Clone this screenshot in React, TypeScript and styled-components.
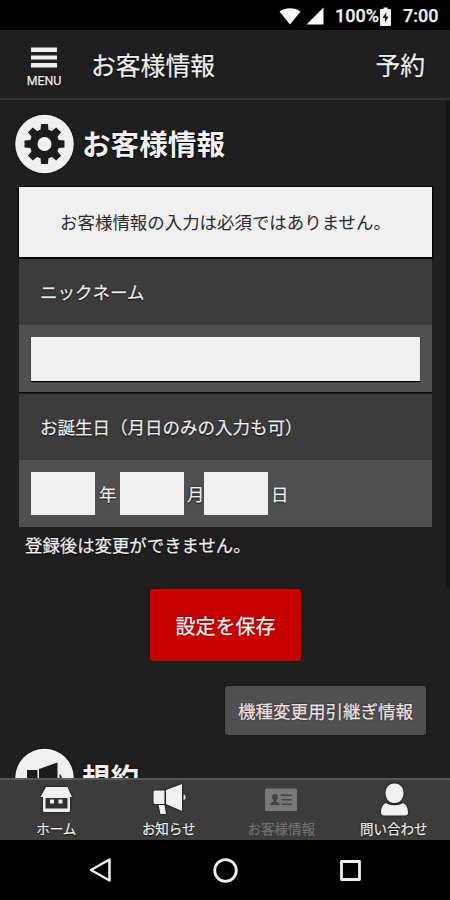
import React from "react";
import styled, { createGlobalStyle } from "styled-components";

const GlobalStyle = createGlobalStyle`
  * { box-sizing: border-box; }
  body { margin: 0; background: #000; }
  button, input { font: inherit; color: inherit; border: 0; padding: 0; margin: 0; border-radius: 0; background: none; }
`;

const Screen = styled.div`
  width: 450px;
  height: 900px;
  display: flex;
  flex-direction: column;
  overflow: hidden;
  background: #1f1f1f;
  color: #f0f0f0;
  font-family: Roboto, "Noto Sans CJK JP", sans-serif;
  text-shadow: 0 0 2px #000, 0 1px 1px #000;
  -webkit-text-stroke: 0.25px currentColor;
  white-space: nowrap;
`;

const StatusBar = styled.div`
  height: 30px;
  flex: none;
  display: flex;
  align-items: center;
  justify-content: flex-end;
  padding: 2px 12px 0 0;
  background: #000;
  font-size: 18px;
  font-weight: 500;
  line-height: 20px;
`;

const StatusIcon = styled.svg<{ $gap: number }>`
  display: block;
  flex: none;
  margin-right: ${(p) => p.$gap}px;
`;

const StatusText = styled.span<{ $width: number }>`
  width: ${(p) => p.$width}px;
`;

const Header = styled.header`
  height: 70px;
  flex: none;
  display: flex;
  align-items: center;
  padding: 0 25px 0 23px;
  border-bottom: 2px solid #353535;
  font-size: 24.8px;
  line-height: 36px;
`;

const MenuButton = styled.button`
  width: 42px;
  margin: 6px 26px 0 0;
  display: flex;
  flex-direction: column;
  align-items: center;
  gap: 5px;
  font-size: 12.4px;
  line-height: 14px;
  text-shadow: inherit;
`;

const HeaderTitle = styled.div`
  flex: 1;
  margin-top: 5px;
`;

const Reserve = styled.button`
  margin-top: 5px;
  text-shadow: inherit;
`;

const Content = styled.main`
  position: relative;
  flex: 1;
  min-height: 0;
  overflow: hidden;
  padding: 14px 18px 0 19px;
`;

const ScrollThumb = styled.div`
  position: absolute;
  top: 1px;
  right: 0;
  width: 4px;
  height: 486px;
  background: #151515;
`;

const SectionTitle = styled.h1`
  height: 60px;
  margin: 0 0 0 -4px;
  display: flex;
  align-items: center;
  gap: 8px;
  font-size: 28.6px;
  font-weight: 700;
  line-height: 42px;
  -webkit-text-stroke: 0;
  svg { display: block; flex: none; filter: drop-shadow(0 0 1px #000); }
`;

const TitleText = styled.span`
  padding-top: 2px;
`;

const Notice = styled.div`
  height: 70px;
  margin-top: 13px;
  padding-bottom: 2px;
  display: flex;
  align-items: center;
  justify-content: center;
  background: #f0f0f0;
  color: #2a2a2a;
  font-size: 17.45px;
  text-shadow: none;
  -webkit-text-stroke: 0;
  box-shadow: 0 0 0 1px #080808, 0 1px 1px 1px #000;
`;

const FieldGroup = styled.section`
  padding-top: 1px;
  border-top: 1px solid #080808;
`;

const FieldLabel = styled.div`
  height: 66px;
  display: flex;
  align-items: center;
  padding: 0 22px 2px 21px;
  background: #3c3c3c;
  font-size: 17.5px;
`;

const FieldBody = styled.div`
  height: 67px;
  display: flex;
  align-items: center;
  padding: 0 12px;
  background: #505050;
  font-size: 17.4px;
`;

const TextInput = styled.input`
  width: 100%;
  height: 44px;
  background: #f0f0f0;
  box-shadow: 0 1px 1px #000;
`;

const DateInput = styled.input`
  width: 64px;
  height: 43px;
  background: #f0f0f0;
`;

const DateUnit = styled.span<{ $width: number; $inset: number }>`
  width: ${(p) => p.$width}px;
  padding-left: ${(p) => p.$inset}px;
`;

const Note = styled.p`
  height: 24px;
  margin: 7px 0 0 6px;
  font-size: 17.4px;
  line-height: 24px;
`;

const SaveButton = styled.button`
  display: block;
  width: 151px;
  height: 72px;
  margin: 31px auto 0;
  border-radius: 3px;
  background: #c80000;
  font-size: 20px;
  text-shadow: 0 0 2px #500000;
  box-shadow: 0 0 2px #101010;
`;

const TransferButton = styled.button`
  display: block;
  width: 201px;
  height: 49px;
  margin: 25px 6px 13px auto;
  border-radius: 3px;
  background: #505050;
  color: #f0e4e4;
  font-size: 17.5px;
  text-shadow: 0 0 2px #000;
  box-shadow: 0 0 2px #101010;
`;

const TabBar = styled.nav`
  height: 62px;
  flex: none;
  display: grid;
  grid-template-columns: repeat(4, 1fr);
  border-top: 2px solid #585858;
  background: #3c3c3c;
`;

const Tab = styled.button<{ $active?: boolean }>`
  display: flex;
  flex-direction: column;
  align-items: center;
  padding-top: 1px;
  color: ${(p) => (p.$active ? "#707070" : "#f0f0f0")};
  font-size: 13.5px;
  line-height: 20px;
  text-shadow: ${(p) => (p.$active ? "0 0 1px #333" : "0 0 2px #000, 0 1px 1px #000")};
  svg {
    display: block;
    margin-bottom: 2px;
    filter: ${(p) => (p.$active ? "none" : "drop-shadow(0 0 1px #000)")};
  }
`;

const SystemBar = styled.div`
  height: 60px;
  flex: none;
  display: flex;
  align-items: center;
  justify-content: center;
  gap: 98px;
  background: #000;
`;

const Hamburger = () => (
  <svg width="26" height="22" viewBox="0 0 26 22" fill="#f0f0f0">
    <path d="M0 0.500h26v4.500H0zM0 8.500h26v4H0zM0 16h26v4.500H0z" />
  </svg>
);

const TEETH = [0, 45, 90, 135, 180, 225, 270, 315];

const GearBadge = () => (
  <svg width="59" height="60" viewBox="-29.5 -30 59 60">
    <circle r="29.3" fill="#f0f0f0" />
    <circle r="14.7" fill="#1d1d1d" />
    {TEETH.map((angle) => (
      <path key={angle} d="M-4.2 -12L-3.4 -20H3.4L4.2 -12Z" fill="#1d1d1d" transform={`rotate(${angle})`} />
    ))}
    <circle r="7" fill="#f0f0f0" />
  </svg>
);

const MegaphoneBadge = () => (
  <svg width="59" height="60" viewBox="0 0 59 60">
    <circle cx="29.5" cy="30" r="29.3" fill="#f0f0f0" />
    <path d="M12 22h10.500v18H12zM24 21l18.500-6.500V49L24 41zM44.500 26c3 1 3 8 0 9z" fill="#1d1d1d" />
  </svg>
);

const HomeIcon = () => (
  <svg width="38" height="36" viewBox="0 0 38 36">
    <path d="M9 6h21.500l4.500 10H3.500z" fill="#f0f0f0" />
    <path d="M6 16h27v13.500a1.500 1.500 0 0 1-1.500 1.500h-24a1.500 1.500 0 0 1-1.500-1.500z" fill="#f0f0f0" />
    <path d="M8.500 17h22v10.500h-22z" fill="#303030" />
    <path d="M13 18.500h4v4h-4zM21.500 18.500h4v4h-4z" fill="#f0f0f0" />
  </svg>
);

const MegaphoneIcon = () => (
  <svg width="38" height="36" viewBox="0 0 38 36" fill="#f0f0f0">
    <path d="M5 9.500q-1.500 0-1.500 1.500v10q0 2 1.500 2h9.500V9.500zM16 9L32 3v27L16 23zM33.500 13.500c3 .5 3 5 0 5.500zM8.500 24h6l1.500 9h-5.500z" />
  </svg>
);

const IdCardIcon = () => (
  <svg width="38" height="36" viewBox="0 0 38 36">
    <rect x="3" y="7.500" width="32" height="22.500" rx="1.500" fill="#787878" />
    <g fill="#444">
      <circle cx="13" cy="16" r="3" />
      <path d="M11.500 17h3v3.500l3 1.500v2h-9v-2l3-1.500zM18.500 13.500h11.500V15H18.500zM19.500 18h10.500v1.500H19.500zM19.500 22.500h10.500V24H19.500z" />
    </g>
  </svg>
);

const PersonIcon = () => (
  <svg width="38" height="36" viewBox="0 0 38 36" fill="#f0f0f0">
    <path d="M19.500 2.500c6 0 9 4.500 9 9.500s-3 10-9 10-9-5-9-10 3-9.500 9-9.500zM11 22c4.500 3 12.500 3 17 0 3.500 1.500 5 5.500 5 9.700 0 1.800-1.200 2.800-3 2.800h-21c-1.800 0-3-1-3-2.800 0-4.200 1.500-8.200 5-9.700z" />
  </svg>
);

const App = () => (
  <>
    <GlobalStyle />
    <Screen>
      <StatusBar>
        <StatusIcon $gap={5} width="22" height="18" viewBox="0 0 22 18">
          <path d="M0.500 4.500C6 0 16 0 21.500 4.500L11 17.500z" fill="#fff" />
        </StatusIcon>
        <StatusIcon $gap={11} width="18" height="18" viewBox="0 0 18 18">
          <path d="M0.500 17.500H17.500V0.500z" fill="#fff" />
        </StatusIcon>
        <StatusText $width={45}>100%</StatusText>
        <StatusIcon $gap={12} width="11" height="19" viewBox="0 0 11 19">
          <path d="M1 2h2.500V0.500h4V2H10q1 0 1 1v15q0 1-1 1H1q-1 0-1-1V3q0-1 1-1z" fill="#f0f0f0" />
          <path d="M6.500 5L2.500 11h2.500v4.500L8.500 9.500H6z" fill="#111" />
        </StatusIcon>
        <StatusText $width={35}>7:00</StatusText>
      </StatusBar>
      <Header>
        <MenuButton>
          <Hamburger />
          MENU
        </MenuButton>
        <HeaderTitle>お客様情報</HeaderTitle>
        <Reserve>予約</Reserve>
      </Header>
      <Content>
        <SectionTitle>
          <GearBadge />
          <TitleText>お客様情報</TitleText>
        </SectionTitle>
        <Notice>お客様情報の入力は必須ではありません。</Notice>
        <FieldGroup>
          <FieldLabel>ニックネーム</FieldLabel>
          <FieldBody>
            <TextInput aria-label="ニックネーム" />
          </FieldBody>
        </FieldGroup>
        <FieldGroup>
          <FieldLabel>お誕生日（月日のみの入力も可）</FieldLabel>
          <FieldBody>
            <DateInput aria-label="年" />
            <DateUnit $width={25} $inset={4}>年</DateUnit>
            <DateInput aria-label="月" />
            <DateUnit $width={20} $inset={3}>月</DateUnit>
            <DateInput aria-label="日" />
            <DateUnit $width={25} $inset={3}>日</DateUnit>
          </FieldBody>
        </FieldGroup>
        <Note>登録後は変更ができません。</Note>
        <SaveButton>設定を保存</SaveButton>
        <TransferButton>機種変更用引継ぎ情報</TransferButton>
        <SectionTitle>
          <MegaphoneBadge />
          <TitleText>規約</TitleText>
        </SectionTitle>
        <ScrollThumb />
      </Content>
      <TabBar>
        <Tab>
          <HomeIcon />
          ホーム
        </Tab>
        <Tab>
          <MegaphoneIcon />
          お知らせ
        </Tab>
        <Tab $active>
          <IdCardIcon />
          お客様情報
        </Tab>
        <Tab>
          <PersonIcon />
          問い合わせ
        </Tab>
      </TabBar>
      <SystemBar>
        <svg width="26" height="26" viewBox="0 0 26 26" fill="none" stroke="#f0f0f0" strokeWidth="2.500" strokeLinejoin="round">
          <path d="M22.500 2.500V23.500L4 13z" />
        </svg>
        <svg width="28" height="28" viewBox="0 0 28 28" fill="none" stroke="#f0f0f0" strokeWidth="2.800">
          <circle cx="14.500" cy="14.500" r="10.800" />
        </svg>
        <svg width="26" height="26" viewBox="0 0 26 26" fill="none" stroke="#f0f0f0" strokeWidth="2.800" strokeLinejoin="round">
          <rect x="4.500" y="4.500" width="18" height="18" />
        </svg>
      </SystemBar>
    </Screen>
  </>
);

export default App;
